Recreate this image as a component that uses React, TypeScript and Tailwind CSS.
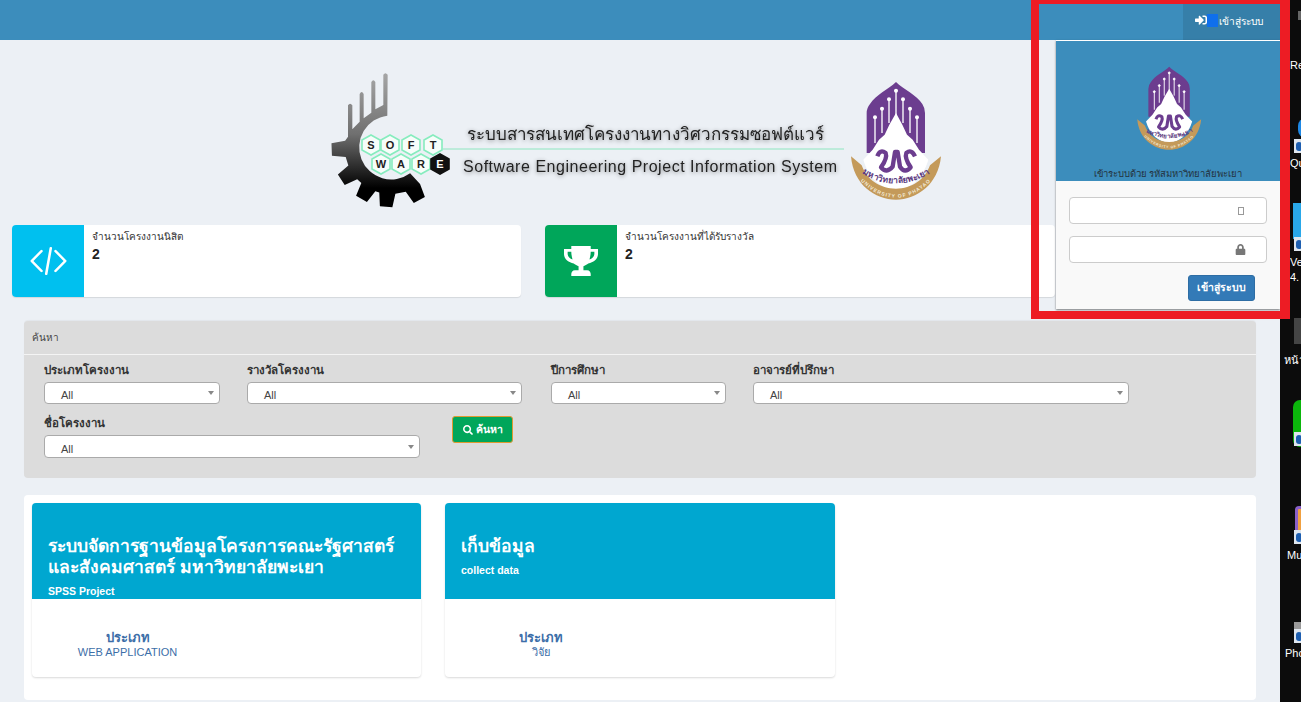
import type { ReactNode } from "react";
import { FaLock, FaSearch, FaSignInAlt } from "react-icons/fa";

const thai = "font-['Liberation_Sans','Noto_Sans','Noto_Sans_CJK_SC',sans-serif]";

function Crest({ className, id }: { className?: string; id: string }) {
  return (
    <svg viewBox="0 0 300 375" preserveAspectRatio="none" className={className}>
      <path d="M153 12 C175 35 215 50 232 78 Q240 90 240 105 L240 225 L65 225 L65 105 Q65 90 75 78 C92 50 130 35 153 12 Z" fill="#6c3d8f" />
      <path
        d="M153 105 L172 140 L186 170 L203 185 L222 215 L250 245 C235 300 195 335 153 335 C110 335 70 300 55 245 L83 215 L102 185 L119 170 L133 140 Z"
        fill="#fff"
      />
      <g stroke="#fff" strokeWidth="4" fill="#fff">
        <path d="M153 38 V112 M132 66 V135 M174 66 V135 M111 92 V165 M195 92 V165 M90 118 V195 M216 118 V195" />
        <circle cx="153" cy="38" r="4" />
        <circle cx="132" cy="64" r="4" />
        <circle cx="174" cy="64" r="4" />
        <circle cx="111" cy="92" r="4" />
        <circle cx="195" cy="92" r="4" />
        <circle cx="90" cy="118" r="4" />
        <circle cx="216" cy="118" r="4" />
      </g>
      <path
        d="M97 235 Q105 212 122 225 Q128 240 108 268 Q125 288 143 266 L150 222 L158 222 Q165 266 165 266 Q180 288 197 268 Q178 240 184 225 Q200 212 210 235"
        fill="none"
        stroke="#6c3d8f"
        strokeWidth="13"
        strokeLinejoin="round"
      />
      <path d="M18 235 C25 320 90 365 153 365 C215 365 280 320 288 235 L255 262 C240 305 200 332 153 332 C105 332 65 305 50 262 Z" fill="#c49a5a" />
      <path id={`${id}-th`} d="M36 272 C70 306 115 316 153 316 C190 316 235 306 270 272" fill="none" />
      <path id={`${id}-en`} d="M50 312 C90 350 125 359 153 359 C180 359 215 350 255 312" fill="none" />
      <text fontSize="26" fontWeight="700" fill="#5c3a80" textAnchor="middle" className={thai}>
        <textPath href={`#${id}-th`} startOffset="50%">
          มหาวิทยาลัยพะเยา
        </textPath>
      </text>
      <text fontSize="15" fontWeight="700" fill="#f3ead8" textAnchor="middle" letterSpacing="3" className="font-['Liberation_Sans',sans-serif]">
        <textPath href={`#${id}-en`} startOffset="50%">
          UNIVERSITY OF PHAYAO
        </textPath>
      </text>
    </svg>
  );
}

// gear drawn in a 3x coordinate space, see the scale() on the group below
const gearPath = (() => {
  const pt = (r: number, deg: number) => {
    const a = (deg * Math.PI) / 180;
    return `${(190 + r * Math.cos(a)).toFixed(1)} ${(232 - r * Math.sin(a)).toFixed(1)}`;
  };
  const teeth = [182, 213, 240, 265, 298]
    .map((t) => `L${pt(140, t - 10)} L${pt(180, t - 6)} L${pt(180, t + 6)} L${pt(140, t + 10)}`)
    .join(" ");
  return `M179 14 Q172 5 166 14 L166 105 L142 118 L142 36 Q136 26 130 36 L130 128 L107 145 L107 72 Q101 60 95 72 L95 155 L73 178 L73 106 Q66 96 60 106 L60 200 ${teeth} L${pt(96, 306)} A96 96 0 1 1 178 137 Z`;
})();

function Hex({ x, y, c, dark }: { x: number; y: number; c: string; dark?: boolean }) {
  return (
    <g>
      <path
        d={`M${x} ${y - 10} L${x + 9} ${y - 5} V${y + 5} L${x} ${y + 10} L${x - 9} ${y + 5} V${y - 5} Z`}
        fill={dark ? "#111" : "#f7fdfa"}
        stroke={dark ? "#111" : "#86ecbe"}
        strokeWidth="1.6"
      />
      <text x={x} y={y + 4} textAnchor="middle" fontSize="11" fontWeight="700" fill={dark ? "#fff" : "#222"} className="font-['Liberation_Sans',sans-serif]">
        {c}
      </text>
    </g>
  );
}

function Banner() {
  return (
    <svg viewBox="0 0 640 160" className="mx-auto mt-5 h-40 w-[640px]">
      <defs>
        <linearGradient id="gearFill" gradientUnits="userSpaceOnUse" x1="0" y1="10" x2="0" y2="415">
          <stop offset="0" stopColor="#a6a6a6" />
          <stop offset="0.45" stopColor="#707070" />
          <stop offset="0.85" stopColor="#000" />
        </linearGradient>
      </defs>
      <g transform="translate(8 10) scale(0.3333)">
        <path d={gearPath} fill="url(#gearFill)" />
      </g>
      <line x1="123" y1="89" x2="524" y2="89" stroke="#8ee6c0" strokeWidth="1" />
      <Hex x={51} y={85} c="S" />
      <Hex x={70} y={85} c="O" />
      <Hex x={91} y={85} c="F" />
      <Hex x={113} y={85} c="T" />
      <Hex x={61} y={104} c="W" />
      <Hex x={81} y={104} c="A" />
      <Hex x={101} y={104} c="R" />
      <Hex x={120} y={104} c="E" dark />
      <text x="147" y="80" fontSize="17" fontWeight="500" fill="#222" textLength="357" className={`${thai} drop-shadow-[0_1px_2px_rgba(0,0,0,0.45)]`}>
        ระบบสารสนเทศโครงงานทางวิศวกรรมซอฟต์แวร์
      </text>
      <text x="143" y="112" fontSize="16" fontWeight="500" fill="#222" textLength="374" className={`${thai} drop-shadow-[0_1px_2px_rgba(0,0,0,0.45)]`}>
        Software Engineering Project Information System
      </text>
      <svg x="525" y="18" width="100" height="125">
        <Crest id="crest-banner" />
      </svg>
    </svg>
  );
}

function StatCard({ icon, bg, label, width }: { icon: ReactNode; bg: string; label: string; width: string }) {
  return (
    <div className={`flex h-[72px] rounded-sm bg-white shadow-[0_1px_1px_rgba(0,0,0,0.1)] ${width}`}>
      <div className={`flex w-[72px] items-center justify-center rounded-l-sm ${bg}`}>{icon}</div>
      <div className="pl-2 pt-[5px]">
        <div className="text-[10px] leading-[13px] text-[#333]">{label}</div>
        <div className="mt-[2px] text-[14px] font-bold leading-[18px] text-[#222]">2</div>
      </div>
    </div>
  );
}

function Field({ label, className, tall }: { label: string; className: string; tall?: boolean }) {
  return (
    <div className={className}>
      <div className="h-[20px] text-[11.500px] font-semibold leading-[16px] text-[#333]">{label}</div>
      <div className={`flex items-center justify-between rounded-[4px] border border-[#aaa] bg-white pl-4 pr-[5px] text-[11px] text-[#444] ${tall ? "h-[23px]" : "h-[22px]"}`}>
        <span className="mt-[4px] leading-[14px]">All</span>
        <span className="h-0 w-0 border-x-[3px] border-t-[4px] border-x-transparent border-t-[#888]" />
      </div>
    </div>
  );
}

function ProjectCard({ title, sub, kind, width }: { title: string[]; sub: string; kind: string; width: string }) {
  return (
    <div className={`h-[174px] rounded-sm bg-white shadow-[0_1px_2px_rgba(0,0,0,0.15)] ${width}`}>
      <div className="flex h-[96px] flex-col justify-end rounded-t-sm bg-[#00a7d0] pb-[1px] pl-4 text-white">
        {title.map((line) => (
          <div key={line} className="text-[17.500px] font-semibold leading-[21px]">
            {line}
          </div>
        ))}
        <div className={`mt-[6px] text-[10.500px] font-bold leading-[14px] ${title.length > 1 ? "" : "mb-[21px]"}`}>{sub}</div>
      </div>
      <div className="w-[191px] pt-[31px] text-center text-[#3c6ea8]">
        <div className="text-[13px] font-semibold leading-[15px]">ประเภท</div>
        <div className="text-[11px] leading-[15px]">{kind}</div>
      </div>
    </div>
  );
}

function LoginMenu() {
  return (
    <div className="absolute right-0 top-10 z-10 h-[269px] w-[224px] border-t border-white bg-[#f9f9f9] shadow-[0_1px_2px_rgba(0,0,0,0.5)]">
      <div className="flex h-[140px] flex-col items-center justify-between bg-[#3c8dbc] pb-[1px] pt-[23px]">
        <Crest id="crest-menu" className="h-[88px] w-[71px]" />
        <div className="text-center text-[9.500px] leading-[13px] text-[#24323c]">เข้าระบบด้วย รหัสมหาวิทยาลัยพะเยา</div>
      </div>
      <div className="px-[13px] pt-4">
        <div className="flex h-[27px] items-center justify-end rounded-[4px] border border-[#ccc] bg-white pr-[22px]">
          <span className="h-2 w-[6px] border border-[#999]" />
        </div>
        <div className="mt-3 flex h-[27px] items-center justify-end rounded-[4px] border border-[#ccc] bg-white pr-[20px] text-[#777]">
          <FaLock className="h-[11px] w-[11px]" />
        </div>
        <div className="mr-3 mt-3 flex justify-end">
          <button className="h-[26px] w-[67px] rounded-[3px] border border-[#2e6da4] bg-[#337ab7] text-[10.500px] font-semibold text-white">เข้าสู่ระบบ</button>
        </div>
      </div>
    </div>
  );
}

function Shortcut({ className }: { className: string }) {
  return (
    <span className={`absolute flex h-[14px] w-[10px] items-end justify-center bg-[#dfe6ee] ${className}`}>
      <span className="mb-[2px] h-[9px] w-[6px] rounded-full bg-[#1e5fb0]" />
    </span>
  );
}

// icons on the desktop behind the browser, only their left edge shows
function DesktopStrip() {
  return (
    <aside className="relative w-[21px] shrink-0 overflow-hidden bg-[#0c0c0c] text-[11px] leading-[13px] text-white">
      <span className="absolute left-[18px] top-[11px] h-[9px] w-[3px] bg-[#666]" />
      <span className="absolute left-[10px] top-[59px]">Re</span>
      <span className="absolute left-[18px] top-[118px] h-[20px] w-[8px] rounded-l-full bg-[#1e88e5]" />
      <Shortcut className="left-[14px] top-[139px]" />
      <span className="absolute left-[10px] top-[157px]">Qu</span>
      <span className="absolute left-[13px] top-[203px] h-[36px] w-[10px] bg-[#29a8ea]" />
      <Shortcut className="left-[14px] top-[237px]" />
      <span className="absolute left-[10px] top-[256px]">Ve</span>
      <span className="absolute left-[10px] top-[271px]">4.</span>
      <span className="absolute left-[14px] top-[318px] h-[26px] w-[8px] bg-[#444]" />
      <span className={`absolute left-[4px] top-[354px] whitespace-nowrap ${thai}`}>หน้า</span>
      <span className="absolute left-[13px] top-[400px] h-[47px] w-[12px] rounded-l-[7px] bg-[#0bb60b]" />
      <Shortcut className="left-[14px] top-[432px]" />
      <span className="absolute left-[15px] top-[506px] h-[36px] w-[10px] rounded-tl-[4px] border-l-[3px] border-t-[3px] border-[#8a5fc8] bg-[#f0a040]" />
      <Shortcut className="left-[14px] top-[530px]" />
      <span className="absolute left-[7px] top-[549px]">Mu</span>
      <span className="absolute left-[14px] top-[622px] h-[14px] w-[10px] bg-[#999]" />
      <Shortcut className="left-[14px] top-[629px]" />
      <span className="absolute left-[5px] top-[647px]">Pho</span>
    </aside>
  );
}

export default function App() {
  return (
    <div className={`relative flex h-[702px] w-[1301px] overflow-hidden bg-[#ecf0f5] ${thai}`}>
      <main className="h-full w-[1280px] shrink-0">
        <header className="relative flex h-10 justify-end bg-[#3c8dbc]">
          <div className="flex w-[97px] items-center bg-[#367fa9] pl-3 text-[10.200px] font-medium text-white">
            <FaSignInAlt className="h-3 w-3" />
            <span className="h-[13px] w-[11px] bg-[#0f6fec]" />
            <span className="ml-[1px] mt-[3px]">เข้าสู่ระบบ</span>
          </div>
          <LoginMenu />
        </header>

        <Banner />

        <div className="mt-[5px] flex gap-6 pl-3">
          <StatCard
            width="w-[509px]"
            bg="bg-[#00c0ef]"
            label="จำนวนโครงงานนิสิต"
            icon={
              <svg viewBox="0 0 32 30" preserveAspectRatio="none" className="h-[30px] w-[37px]" fill="none" stroke="#fff" strokeWidth="2.2" strokeLinecap="round" strokeLinejoin="round">
                <path d="M10 5 L1.5 15 L10 25 M22 5 L30.5 15 L22 25 M18 2 L14 28" />
              </svg>
            }
          />
          <StatCard
            width="w-[510px]"
            bg="bg-[#00a65a]"
            label="จำนวนโครงงานที่ได้รับรางวัล"
            icon={
              <svg viewBox="0 0 28 32" preserveAspectRatio="none" className="h-[31px] w-[34px]" fill="#fff">
                <path
                  d="M6 0 H22 V3 H28 V8 C28 14 24 17 20 18 C19 19 17 20 16 21 V25 H19 C21 25 22 27 22 29 V31 H6 V29 C6 27 7 25 9 25 H12 V21 C11 20 9 19 8 18 C4 17 0 14 0 8 V3 H6 Z M3 6 V8 C3 11 5 13 7 14 C6.500 11 6 9 6 6 Z M25 6 H22 C22 9 21.500 11 21 14 C23 13 25 11 25 8 Z"
                  fillRule="evenodd"
                />
              </svg>
            }
          />
        </div>

        <section className="mx-6 mt-6 h-[157px] rounded-sm bg-[#dcdcdc] shadow-[0_-1px_1px_rgba(0,0,0,0.04)]">
          <div className="h-[34px] border-b border-[#f4f4f4] pl-2 pt-[10px] text-[10px] leading-[13px] text-[#444]">ค้นหา</div>
          <div className="pl-5 pt-[7px]">
            <div className="flex">
              <Field label="ประเภทโครงงาน" className="w-[176px]" />
              <Field label="รางวัลโครงงาน" className="ml-[27px] w-[275px]" />
              <Field label="ปีการศึกษา" className="ml-[29px] w-[175px]" />
              <Field label="อาจารย์ที่ปรึกษา" className="ml-[27px] w-[376px]" />
            </div>
            <div className="mt-[11px] flex">
              <Field label="ชื่อโครงงาน" className="w-[376px]" tall />
              <button className="ml-8 mt-[1px] flex h-[27px] w-[61px] items-center justify-center gap-[3px] rounded-[3px] border border-[#e09a30] bg-[#00a65a] text-[10.500px] font-bold text-white">
                <FaSearch className="h-[10px] w-[10px]" />
                ค้นหา
              </button>
            </div>
          </div>
        </section>

        <section className="mx-6 mt-[17px] flex h-[205px] items-start gap-6 rounded-sm bg-white pl-2 pt-2">
          <ProjectCard width="w-[389px]" title={["ระบบจัดการฐานข้อมูลโครงการคณะรัฐศาสตร์", "และสังคมศาสตร์ มหาวิทยาลัยพะเยา"]} sub="SPSS Project" kind="WEB APPLICATION" />
          <ProjectCard width="w-[390px]" title={["เก็บข้อมูล"]} sub="collect data" kind="วิจัย" />
        </section>
      </main>

      <DesktopStrip />

      <div className="pointer-events-none absolute left-[1031px] top-0 z-20 h-[319px] w-[259px] border-b-[8px] border-l-[8px] border-r-[10px] border-t-[4px] border-[#ed1c24]" />
    </div>
  );
}
